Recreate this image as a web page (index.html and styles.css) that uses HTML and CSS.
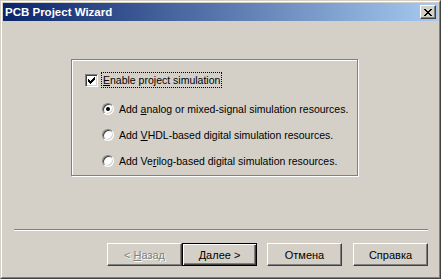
FILE: index.html
```html
<!DOCTYPE html>
<html lang="ru">
<head>
    <meta charset="UTF-8">
    <title>PCB Project Wizard</title>
    <link rel="stylesheet" href="styles.css">
</head>
<body>
    <div class="window">
        <div class="frame">
            <div class="titlebar">
                <span class="title">PCB Project Wizard</span>
                <button class="close" aria-label="Close">
                    <svg width="8" height="7" viewBox="0 0 8 7" shape-rendering="crispEdges">
                        <rect x="0" y="0" width="2" height="1"/><rect x="6" y="0" width="2" height="1"/>
                        <rect x="1" y="1" width="2" height="1"/><rect x="5" y="1" width="2" height="1"/>
                        <rect x="2" y="2" width="4" height="1"/>
                        <rect x="3" y="3" width="2" height="1"/>
                        <rect x="2" y="4" width="4" height="1"/>
                        <rect x="1" y="5" width="2" height="1"/><rect x="5" y="5" width="2" height="1"/>
                        <rect x="0" y="6" width="2" height="1"/><rect x="6" y="6" width="2" height="1"/>
                    </svg>
                </button>
            </div>

            <div class="content">
                <div class="group">
                    <div class="check-row">
                        <span class="checkbox">
                            <svg width="13" height="13" viewBox="0 0 13 13" shape-rendering="crispEdges">
                                <rect x="3" y="5" width="1" height="3"/>
                                <rect x="4" y="6" width="1" height="3"/>
                                <rect x="5" y="7" width="1" height="3"/>
                                <rect x="6" y="6" width="1" height="3"/>
                                <rect x="7" y="5" width="1" height="3"/>
                                <rect x="8" y="4" width="1" height="3"/>
                                <rect x="9" y="3" width="1" height="3"/>
                            </svg>
                        </span>
                        <span class="focus"><u>E</u>nable project simulation</span>
                    </div>

                    <div class="options">
                        <div class="radio-row">
                            <span class="radio checked"></span>
                            <span>Add <u>a</u>nalog or mixed-signal simulation resources.</span>
                        </div>
                        <div class="radio-row">
                            <span class="radio"></span>
                            <span>Add <u>V</u>HDL-based digital simulation resources.</span>
                        </div>
                        <div class="radio-row">
                            <span class="radio"></span>
                            <span>Add Ve<u>r</u>ilog-based digital simulation resources.</span>
                        </div>
                    </div>
                </div>

                <div class="separator"></div>

                <div class="buttons">
                    <button class="btn disabled">&lt; <u>Н</u>азад</button>
                    <button class="btn default"><u>Д</u>алее &gt;</button>
                    <button class="btn spaced">Отмена</button>
                    <button class="btn spaced">Справка</button>
                </div>
            </div>
        </div>
    </div>
</body>
</html>
```

FILE: styles.css
```css
body {
    margin: 0;
    background: #d4d0c8;
    font-family: 'Liberation Sans', Arial, sans-serif;
    font-size: 10.5px;
    color: #000;
}

.window {
    width: 441px;
    height: 279px;
    box-sizing: border-box;
    border: 1px solid;
    border-color: #d4d0c8 #404040 #404040 #d4d0c8;
}

.frame {
    height: 100%;
    box-sizing: border-box;
    border: 1px solid;
    border-color: #fff #808080 #808080 #fff;
    padding: 1px;
    display: flex;
    flex-direction: column;
}

.titlebar {
    height: 18px;
    display: flex;
    align-items: center;
    padding-left: 2px;
    padding-right: 2px;
    background: linear-gradient(90deg, #0a246a, #a6caf0);
}

.title {
    flex: 1;
    color: #fff;
    font-weight: bold;
    font-size: 11.5px;
}

.close {
    width: 16px;
    height: 14px;
    padding: 0;
    display: flex;
    align-items: center;
    justify-content: center;
    background: #d4d0c8;
    border: 1px solid;
    border-color: #fff #404040 #404040 #fff;
    box-shadow: inset -1px -1px 0 #808080;
}

.content {
    flex: 1;
    display: flex;
    flex-direction: column;
}

.group {
    margin: 38px 0 0 68px;
    width: 287px;
    height: 117px;
    box-sizing: border-box;
    border: 1px solid #808080;
    box-shadow: 1px 1px 0 #fff, inset 1px 1px 0 #fff;
    padding: 12px 0 0 13px;
}

.check-row {
    display: flex;
    align-items: center;
    height: 16px;
}

.checkbox {
    width: 13px;
    height: 13px;
    box-sizing: border-box;
    background: #fff;
    border: 1px solid;
    border-color: #808080 #fff #fff #808080;
    box-shadow: inset 1px 1px 0 #404040, inset -1px -1px 0 #d4d0c8;
    position: relative;
}

.checkbox svg {
    position: absolute;
    left: -1px;
    top: -1px;
}

.focus {
    margin-left: 4px;
    padding: 0 1px;
    line-height: 14px;
    white-space: nowrap;
    outline: 1px dotted #000;
    outline-offset: 0;
}

.options {
    margin: 13px 0 0 17px;
    display: flex;
    flex-direction: column;
    gap: 10px;
}

.radio-row {
    display: flex;
    align-items: center;
    height: 16px;
    gap: 5px;
    white-space: nowrap;
}

.radio {
    width: 12px;
    height: 12px;
    box-sizing: border-box;
    border-radius: 50%;
    background: #fff;
    border: 1px solid;
    border-color: #808080 #fff #fff #808080;
    box-shadow: inset 1px 1px 0 #404040, inset -1px -1px 0 #d4d0c8;
    display: flex;
    align-items: center;
    justify-content: center;
}

.radio.checked::after {
    content: '';
    width: 4px;
    height: 4px;
    border-radius: 50%;
    background: #000;
}

.separator {
    margin: 53px 0 0 11px;
    width: 414px;
    height: 2px;
    box-sizing: border-box;
    border-top: 1px solid #808080;
    border-bottom: 1px solid #fff;
}

.buttons {
    margin: 12px 0 0 104px;
    display: flex;
}

.btn {
    width: 75px;
    height: 23px;
    padding: 0;
    font-family: inherit;
    font-size: 11px;
    color: #000;
    background: #d4d0c8;
    border: 1px solid;
    border-color: #fff #404040 #404040 #fff;
    box-shadow: inset -1px -1px 0 #808080;
}

.btn.default {
    border: 1px solid #000;
    box-shadow: inset 1px 1px 0 #fff, inset -1px -1px 0 #404040, inset -2px -2px 0 #808080;
}

.btn.disabled {
    color: #808080;
    text-shadow: 1px 1px 0 #fff;
}

.btn.spaced {
    margin-left: 10px;
}

.btn.spaced + .btn.spaced {
    margin-left: 11px;
}
```
